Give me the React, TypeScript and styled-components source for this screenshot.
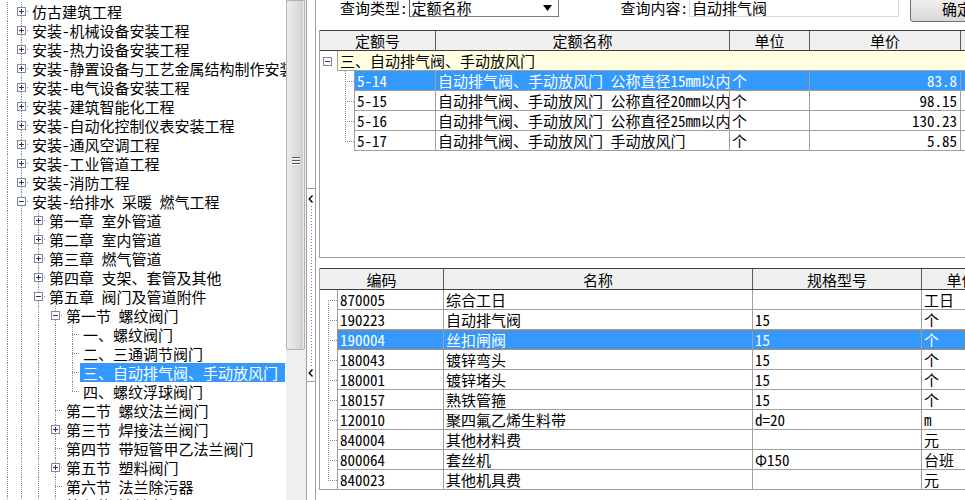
import React from "react";
import styled, { createGlobalStyle, css } from "styled-components";

const FONT = `"Noto Sans Mono CJK SC", "Noto Sans CJK SC", "Liberation Sans", sans-serif`;
const GRID_LINE = "#a0a0a0";
const HEAD_LINE = "#404040";
const SELECT_BLUE = "#3399ff";
const TREE_DOT = "#8c8c8c";

type Link = "pipe" | "tee" | "elbow" | "down";

interface TreeNode {
  level: number;
  kind: "plus" | "minus" | "leaf";
  text: string;
  selected?: boolean;
  last?: boolean;
}

const treeNodes: Array<TreeNode> = [
  { level: 0, kind: "plus", text: "仿古建筑工程" },
  { level: 0, kind: "plus", text: "安装-机械设备安装工程" },
  { level: 0, kind: "plus", text: "安装-热力设备安装工程" },
  { level: 0, kind: "plus", text: "安装-静置设备与工艺金属结构制作安装工程" },
  { level: 0, kind: "plus", text: "安装-电气设备安装工程" },
  { level: 0, kind: "plus", text: "安装-建筑智能化工程" },
  { level: 0, kind: "plus", text: "安装-自动化控制仪表安装工程" },
  { level: 0, kind: "plus", text: "安装-通风空调工程" },
  { level: 0, kind: "plus", text: "安装-工业管道工程" },
  { level: 0, kind: "plus", text: "安装-消防工程" },
  { level: 0, kind: "minus", text: "安装-给排水 采暖 燃气工程" },
  { level: 1, kind: "plus", text: "第一章 室外管道" },
  { level: 1, kind: "plus", text: "第二章 室内管道" },
  { level: 1, kind: "plus", text: "第三章 燃气管道" },
  { level: 1, kind: "plus", text: "第四章 支架、套管及其他" },
  { level: 1, kind: "minus", text: "第五章 阀门及管道附件" },
  { level: 2, kind: "minus", text: "第一节 螺纹阀门" },
  { level: 3, kind: "leaf", text: "一、螺纹阀门" },
  { level: 3, kind: "leaf", text: "二、三通调节阀门" },
  { level: 3, kind: "leaf", text: "三、自动排气阀、手动放风门", selected: true },
  { level: 3, kind: "leaf", text: "四、螺纹浮球阀门", last: true },
  { level: 2, kind: "leaf", text: "第二节 螺纹法兰阀门" },
  { level: 2, kind: "plus", text: "第三节 焊接法兰阀门" },
  { level: 2, kind: "leaf", text: "第四节 带短管甲乙法兰阀门" },
  { level: 2, kind: "plus", text: "第五节 塑料阀门" },
  { level: 2, kind: "leaf", text: "第六节 法兰除污器" },
  { level: 2, kind: "leaf", text: "第七节 法兰水表" },
];

const quotaRows = [
  { code: "5-14", name: "自动排气阀、手动放风门 公称直径15mm以内", unit: "个", price: "83.8" },
  { code: "5-15", name: "自动排气阀、手动放风门 公称直径20mm以内", unit: "个", price: "98.15" },
  { code: "5-16", name: "自动排气阀、手动放风门 公称直径25mm以内", unit: "个", price: "130.23" },
  { code: "5-17", name: "自动排气阀、手动放风门 手动放风门", unit: "个", price: "5.85" },
];

const materialRows = [
  { code: "870005", name: "综合工日", spec: "", unit: "工日" },
  { code: "190223", name: "自动排气阀", spec: "15", unit: "个" },
  { code: "190004", name: "丝扣闸阀", spec: "15", unit: "个" },
  { code: "180043", name: "镀锌弯头", spec: "15", unit: "个" },
  { code: "180001", name: "镀锌堵头", spec: "15", unit: "个" },
  { code: "180157", name: "熟铁管箍", spec: "15", unit: "个" },
  { code: "120010", name: "聚四氟乙烯生料带", spec: "d=20", unit: "m" },
  { code: "840004", name: "其他材料费", spec: "", unit: "元" },
  { code: "800064", name: "套丝机", spec: "Φ150", unit: "台班" },
  { code: "840023", name: "其他机具费", spec: "", unit: "元" },
];

const GlobalStyle = createGlobalStyle`
  html, body {
    margin: 0;
    padding: 0;
    background: #fff;
    overflow: hidden;
  }
  body {
    font-family: ${FONT};
    font-size: 15px;
    color: #000;
  }
`;

const dotV = `repeating-linear-gradient(to bottom, ${TREE_DOT} 0 1px, transparent 1px 2px)`;
const dotH = `repeating-linear-gradient(to right, ${TREE_DOT} 0 1px, transparent 1px 2px)`;

// dotted tree connectors, drawn as background layers of the cell
const linkLines = (kind: Link, x: number, len: number) => {
  const layers: string[] = [];
  if (kind === "pipe" || kind === "tee") layers.push(`${dotV} ${x}px 0 / 1px 100% no-repeat`);
  if (kind === "elbow") layers.push(`${dotV} ${x}px 0 / 1px 50% no-repeat`);
  if (kind === "down") layers.push(`${dotV} ${x}px 100% / 1px 50% no-repeat`);
  if (kind !== "pipe") layers.push(`${dotH} ${x}px 50% / ${len}px 1px no-repeat`);
  return css`
    background: ${layers.join(", ")};
  `;
};

const Expander = ({ open }: { open: boolean }) => (
  <svg width="9" height="9" viewBox="0 0 9 9">
    <rect x="0.5" y="0.5" width="8" height="8" fill="#fff" stroke="#7f8a99" />
    <path d="M2 4.5h5" stroke="#1c3478" />
    {!open && <path d="M4.5 2v5" stroke="#1c3478" />}
  </svg>
);

const BackArrow = () => (
  <svg width="6" height="8" viewBox="0 0 6 8">
    <path d="M4.5 0.5L1.2 4l3.3 3.5" fill="none" stroke="#000" strokeWidth="1.4" />
  </svg>
);

const DropArrow = () => (
  <svg width="9" height="6" viewBox="0 0 9 6">
    <path d="M0 0h9L4.5 6z" fill="#000" />
  </svg>
);

const Screen = styled.div`
  display: flex;
  width: 965px;
  height: 500px;
  overflow: hidden;
  background: #fff;
`;

/* ---------- left tree ---------- */

const TreePane = styled.div`
  flex: 0 0 286px;
  height: 500px;
  overflow: hidden;
  padding-top: 2px;
  box-sizing: border-box;
`;

const TreeRow = styled.div`
  display: flex;
  height: 19px;
  white-space: nowrap;
`;

const Guide = styled.span<{ $w: number; $x: number; $kind: Link; $len?: number }>`
  flex: 0 0 ${(p) => p.$w}px;
  display: flex;
  align-items: center;
  box-sizing: border-box;
  padding-left: ${(p) => p.$x - 4}px;
  ${(p) => linkLines(p.$kind, p.$x, p.$len ?? 0)}
`;

const TreeLabel = styled.span<{ $selected?: boolean }>`
  line-height: 19px;
  padding: 0 3px;
  ${(p) =>
    p.$selected &&
    css`
      background: ${SELECT_BLUE};
      color: #fff;
      padding-right: 7px;
    `}
`;

const ScrollBar = styled.div`
  flex: 0 0 21px;
  display: flex;
  flex-direction: column;
  box-sizing: border-box;
  border-right: 1px solid ${GRID_LINE};
  background: #efefef;
`;

const Thumb = styled.div`
  height: 350px;
  width: 19px;
  box-sizing: border-box;
  border: 1px solid #b4b4b4;
  border-radius: 0 0 2px 2px;
  background: linear-gradient(to right, #ececec, #dcdcdc 60%, #cfcfcf 90%, #f4f4f4);
  display: flex;
  flex-direction: column;
  align-items: center;
  justify-content: center;
  gap: 2px;
  padding-bottom: 30px;
`;

const Grip = styled.span`
  width: 8px;
  height: 1px;
  background: #5a5a5a;
  box-shadow: 0 1px 0 #fafafa;
`;

const Splitter = styled.div`
  flex: 0 0 9px;
  box-sizing: border-box;
  border-right: 1px solid ${GRID_LINE};
  padding-top: 188px;
`;

const SplitButton = styled.div`
  height: 194px;
  box-sizing: border-box;
  border-top: 1px solid ${GRID_LINE};
  border-bottom: 1px solid ${GRID_LINE};
  display: flex;
  flex-direction: column;
  align-items: center;
  padding: 6px 0 4px;
  gap: 3px;
`;

const SplitDots = styled.span`
  flex: 1;
  width: 1px;
  background: repeating-linear-gradient(to bottom, #3f8fe8 0 1px, transparent 1px 3px);
`;

/* ---------- right side ---------- */

const RightPane = styled.div`
  flex: 1;
  min-width: 0;
  display: flex;
  flex-direction: column;
  padding-left: 3px;
  overflow: hidden;
`;

const Toolbar = styled.div`
  flex: 0 0 30px;
  display: flex;
  align-items: flex-start;
  padding-left: 21px;
  white-space: nowrap;
  & > * {
    flex-shrink: 0;
  }
`;

const FieldLabel = styled.span<{ $gap?: number }>`
  margin-left: ${(p) => p.$gap ?? 0}px;
  line-height: 15px;
`;

const SelectBox = styled.div`
  margin: -5px 0 0 1px;
  width: 150px;
  height: 22px;
  box-sizing: border-box;
  border: 1px solid #7a7a7a;
  border-left-color: #5a5a5a;
  background: #fff;
  display: flex;
  align-items: center;
  justify-content: space-between;
  padding: 3px 6px 0 2px;
  line-height: 17px;
`;

const TextBox = styled.div`
  margin: -5px 0 0 1px;
  width: 210px;
  height: 22px;
  box-sizing: border-box;
  border: 1px solid #d8d8d8;
  padding: 4px 0 0 2px;
  line-height: 16px;
`;

const OkButton = styled.div`
  margin: -6px 0 0 11px;
  width: 94px;
  height: 28px;
  box-sizing: border-box;
  border: 1px solid #707070;
  border-radius: 3px;
  background: linear-gradient(to bottom, #f4f4f4, #e6e6e6 50%, #d8d8d8);
  text-align: center;
  padding-top: 5px;
  line-height: 18px;
`;

const Grid = styled.div<{ $h: number; $gap?: number }>`
  flex: 0 0 ${(p) => p.$h}px;
  margin-top: ${(p) => p.$gap ?? 0}px;
  box-sizing: border-box;
  border-left: 1px solid ${GRID_LINE};
  border-bottom: 1px solid ${GRID_LINE};
  overflow: hidden;
`;

const HeadRow = styled.div<{ $h: number }>`
  display: flex;
  height: ${(p) => p.$h}px;
  box-sizing: border-box;
  margin-left: -1px;
  border: 1px solid ${HEAD_LINE};
  border-right: none;
  background: #f0f0f0;
`;

const HeadCell = styled.div<{ $w?: number }>`
  ${(p) =>
    p.$w
      ? css`
          flex: 0 0 ${p.$w}px;
        `
      : css`
          flex: 1 0 80px;
        `}
  box-sizing: border-box;
  border-right: 1px solid #5c5c5c;
  display: flex;
  align-items: center;
  justify-content: center;
  white-space: nowrap;
  overflow: hidden;
`;

const GroupRow = styled.div`
  display: flex;
  height: 20px;
`;

const GroupBar = styled.div`
  flex: 1;
  background: #ffffe1;
  border-left: 1px solid ${GRID_LINE};
  border-bottom: 1px solid ${GRID_LINE};
  padding-left: 2px;
  line-height: 19px;
  white-space: nowrap;
`;

const DataRow = styled.div`
  display: flex;
  height: 20px;
`;

const Cells = styled.div<{ $selected?: boolean; $focus?: boolean }>`
  flex: 1;
  min-width: 0;
  display: flex;
  box-sizing: border-box;
  border-left: 1px solid ${GRID_LINE};
  border-bottom: 1px solid ${GRID_LINE};
  ${(p) =>
    p.$selected &&
    css`
      background: ${SELECT_BLUE};
      color: #fff;
    `}
  ${(p) =>
    p.$focus &&
    css`
      outline: 1px dotted #d9731c;
      outline-offset: -1px;
    `}
`;

const Cell = styled.div<{ $w?: number; $right?: boolean }>`
  ${(p) =>
    p.$w
      ? css`
          flex: 0 0 ${p.$w}px;
        `
      : css`
          flex: 1 0 60px;
        `}
  box-sizing: border-box;
  border-right: 1px solid ${GRID_LINE};
  padding: 0 ${(p) => (p.$right ? 3 : 2)}px;
  text-align: ${(p) => (p.$right ? "right" : "left")};
  line-height: 19px;
  white-space: nowrap;
  overflow: hidden;
`;

const linkFor = (i: number, n: number, first: Link): Link => (i === n - 1 ? "elbow" : i === 0 ? first : "tee");

const App = () => {
  return (
    <>
      <GlobalStyle />
      <Screen>
        <TreePane>
          {treeNodes.map((node, i) => (
            <TreeRow key={i}>
              <Guide $w={13} $x={7} $kind="pipe" />
              {Array.from({ length: node.level }).map((_, k) => (
                <Guide key={k} $w={17} $x={8} $kind="pipe" />
              ))}
              <Guide $w={16} $x={8} $len={8} $kind={node.last ? "elbow" : "tee"}>
                {node.kind !== "leaf" && <Expander open={node.kind === "minus"} />}
              </Guide>
              <TreeLabel $selected={node.selected}>{node.text}</TreeLabel>
            </TreeRow>
          ))}
        </TreePane>

        <ScrollBar>
          <Thumb>
            <Grip />
            <Grip />
            <Grip />
          </Thumb>
        </ScrollBar>

        <Splitter>
          <SplitButton>
            <BackArrow />
            <SplitDots />
            <BackArrow />
          </SplitButton>
        </Splitter>

        <RightPane>
          <Toolbar>
            <FieldLabel>查询类型:</FieldLabel>
            <SelectBox>
              <span>定额名称</span>
              <DropArrow />
            </SelectBox>
            <FieldLabel $gap={62}>查询内容:</FieldLabel>
            <TextBox>自动排气阀</TextBox>
            <OkButton>确定</OkButton>
          </Toolbar>

          <Grid $h={228}>
            <HeadRow $h={21}>
              <HeadCell $w={116}>定额号</HeadCell>
              <HeadCell $w={294}>定额名称</HeadCell>
              <HeadCell $w={80}>单位</HeadCell>
              <HeadCell $w={151}>单价</HeadCell>
              <HeadCell />
            </HeadRow>
            <GroupRow>
              <Guide $w={17} $x={7} $kind="pipe" style={{ background: "none" }}>
                <Expander open />
              </Guide>
              <GroupBar>三、自动排气阀、手动放风门</GroupBar>
            </GroupRow>
            {quotaRows.map((row, i) => (
              <DataRow key={row.code}>
                <Guide $w={34} $x={25} $len={9} $kind={linkFor(i, quotaRows.length, "tee")} />
                <Cells $selected={i === 0}>
                  <Cell $w={81}>{row.code}</Cell>
                  <Cell $w={294}>{row.name}</Cell>
                  <Cell $w={80}>{row.unit}</Cell>
                  <Cell $w={151} $right>
                    {row.price}
                  </Cell>
                  <Cell />
                </Cells>
              </DataRow>
            ))}
          </Grid>

          <Grid $h={222} $gap={10}>
            <HeadRow $h={22}>
              <HeadCell $w={124}>编码</HeadCell>
              <HeadCell $w={309}>名称</HeadCell>
              <HeadCell $w={169}>规格型号</HeadCell>
              <HeadCell>单位</HeadCell>
            </HeadRow>
            {materialRows.map((row, i) => (
              <DataRow key={row.code}>
                <Guide $w={17} $x={8} $len={9} $kind={linkFor(i, materialRows.length, "down")} />
                <Cells $selected={i === 2} $focus={i === 2}>
                  <Cell $w={106}>{row.code}</Cell>
                  <Cell $w={309}>{row.name}</Cell>
                  <Cell $w={169}>{row.spec}</Cell>
                  <Cell>{row.unit}</Cell>
                </Cells>
              </DataRow>
            ))}
          </Grid>
        </RightPane>
      </Screen>
    </>
  );
};

export default App;
